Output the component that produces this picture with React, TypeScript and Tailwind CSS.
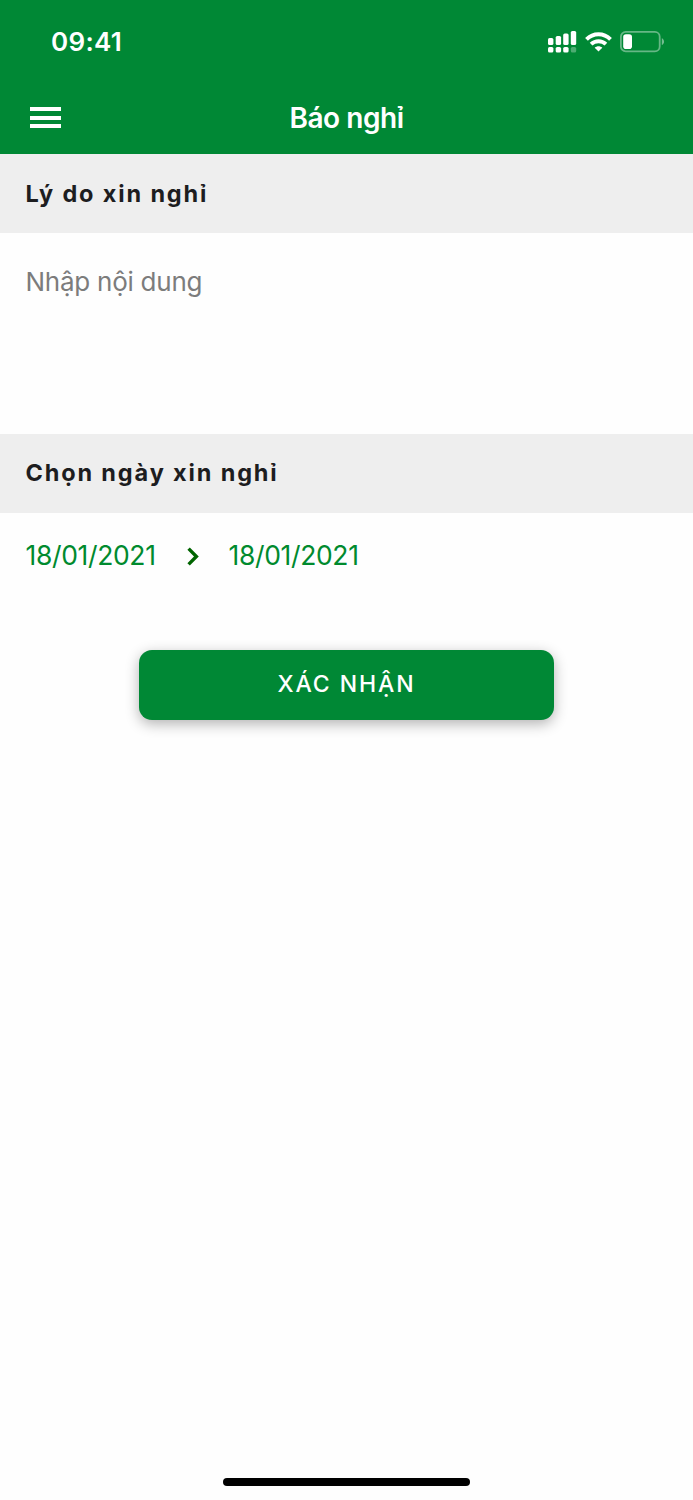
import { useState } from 'react';
import type { ReactNode } from 'react';

function SignalIcon() {
  return (
    <svg width="29" height="22" viewBox="0 0 29 22" fill="white">
      <rect x="0" y="7" width="5.4" height="7" rx="1.6" />
      <rect x="7.7" y="5" width="5.4" height="9" rx="1.6" />
      <rect x="15.2" y="2.4" width="5.4" height="11.6" rx="1.6" />
      <rect x="22.8" y="0" width="5.4" height="14" rx="1.6" />
      <rect x="0" y="15.9" width="5.4" height="5.7" rx="1.6" />
      <rect x="7.7" y="15.9" width="5.4" height="5.7" rx="1.6" />
      <rect x="15.2" y="15.9" width="5.4" height="5.7" rx="1.6" />
      <rect x="22.8" y="15.9" width="5.4" height="5.7" rx="1.6" opacity="0.3" />
    </svg>
  );
}

function WifiIcon() {
  return (
    <svg width="27" height="20" viewBox="0 0 27 20" fill="none" stroke="white" strokeWidth="3.9">
      <path d="M1.5 7.3C8.2 0.5 18.8 0.5 25.5 7.3" />
      <path d="M6.1 12.2C10.3 8.2 16.7 8.2 20.9 12.2" />
      <path d="M13.5 19.6L9.7 15.8C11.9 13.8 15.1 13.8 17.3 15.8Z" fill="white" stroke="none" />
    </svg>
  );
}

function BatteryIcon() {
  return (
    <svg width="45" height="22" viewBox="0 0 45 22" fill="none">
      <rect x="0.9" y="0.9" width="38.8" height="19.4" rx="4.8" stroke="white" strokeOpacity="0.4" strokeWidth="1.8" />
      <rect x="3.2" y="3.2" width="8.8" height="14.8" rx="2.8" fill="white" />
      <path d="M41.8 7.2C44.8 8.5 44.8 12.7 41.8 14Z" fill="white" fillOpacity="0.45" />
    </svg>
  );
}

function StatusBar() {
  return (
    <div className="flex h-[83px] items-center justify-between pl-[51px] pr-7">
      <span className="text-[26px] font-semibold leading-none tracking-[0.3px]">09:41</span>
      <div className="flex items-center">
        <SignalIcon />
        <div className="mx-2">
          <WifiIcon />
        </div>
        <BatteryIcon />
      </div>
    </div>
  );
}

function SectionTitle({ children }: { children: ReactNode }) {
  return (
    <h2 className="flex h-[79px] items-center bg-[#eeeeee] px-[25.5px] text-[23.5px] font-bold tracking-[1.85px] text-[#1d1d1f]">
      {children}
    </h2>
  );
}

export default function App() {
  const [reason, setReason] = useState('');

  return (
    <div className="flex h-[1500px] w-[693px] flex-col bg-[#fefefe] font-['Inter',sans-serif]">
      <header className="h-[154px] bg-[#008835] text-white">
        <StatusBar />
        <div className="grid h-[69px] grid-cols-[1fr_auto_1fr] items-center px-[30px]">
          <button aria-label="Menu" className="flex w-[31px] flex-col gap-[4.5px]">
            <span className="h-[4px] w-full bg-white" />
            <span className="h-[4px] w-full bg-white" />
            <span className="h-[4px] w-full bg-white" />
          </button>
          <h1 className="text-[28px] font-semibold tracking-[-0.45px]">Báo nghỉ</h1>
        </div>
      </header>

      <SectionTitle>Lý do xin nghỉ</SectionTitle>
      <textarea
        value={reason}
        onChange={(e) => setReason(e.target.value)}
        placeholder="Nhập nội dung"
        className="block h-[200.5px] resize-none px-[25.5px] pt-[33px] text-[26px] leading-8 tracking-[-0.25px] outline-none placeholder:text-[#7c7c7c]"
      />

      <SectionTitle>Chọn ngày xin nghỉ</SectionTitle>
      <div className="flex h-[87px] items-center px-[25.5px] text-[26.5px] tracking-[-0.35px] text-[#008a2e]">
        <button className="w-[131px] whitespace-nowrap text-left">18/01/2021</button>
        <svg className="ml-[30px] mr-[30px]" width="12" height="19" viewBox="0 0 12 19" fill="none" stroke="#006400" strokeWidth="3.4">
          <path d="M1.6 1.6L9.4 9.5L1.6 17.4" />
        </svg>
        <button className="w-[131px] whitespace-nowrap text-left">18/01/2021</button>
      </div>

      <button className="mt-[50px] h-[70px] w-[415px] self-center rounded-[13px] bg-[#008835] text-[23px] font-medium tracking-[1.9px] text-white shadow-[0_4px_14px_rgba(0,0,0,0.3)]">
        XÁC NHẬN
      </button>

      <div className="mb-[14px] mt-auto h-2 w-[247px] self-center rounded-full bg-black" />
    </div>
  );
}
